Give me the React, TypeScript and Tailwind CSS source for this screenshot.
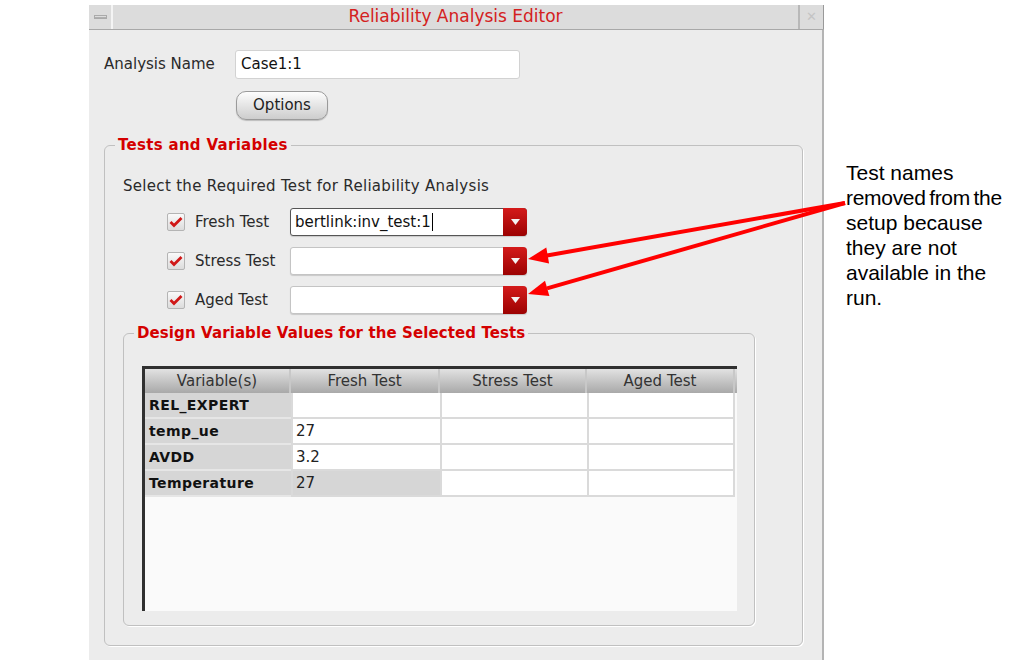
import React from 'react';

const ui = { fontFamily: '"DejaVu Sans", "Liberation Sans", sans-serif' };
const note = { fontFamily: '"Liberation Sans", Arial, sans-serif' };

const tests = [
  { name: 'Fresh Test', value: 'bertlink:inv_test:1', active: true },
  { name: 'Stress Test', value: '', active: false },
  { name: 'Aged Test', value: '', active: false },
];

const rows = [
  { name: 'REL_EXPERT', fresh: '', grey: false },
  { name: 'temp_ue', fresh: '27', grey: false },
  { name: 'AVDD', fresh: '3.2', grey: false },
  { name: 'Temperature', fresh: '27', grey: true },
];

const Check = () => (
  <div className="w-[18px] h-[18px] border border-[#b4b4b4] rounded-[2px] bg-gradient-to-b from-[#fafafa] to-[#dcdcdc] flex items-center justify-center">
    <svg width="14" height="12" viewBox="0 0 14 12">
      <path d="M1.5 6 L5 9.5 L12.5 2" stroke="#d01818" strokeWidth="2.8" fill="none" />
    </svg>
  </div>
);

const Combo = ({ value, active }: { value: string; active: boolean }) => (
  <div className={`w-[237px] h-[28px] flex rounded-[3px] border ${active ? 'border-[#555]' : 'border-[#c4c4c4]'} bg-white shadow-[0_1px_1px_rgba(0,0,0,0.15)]`}>
    <div className="flex-1 flex items-center pl-[4px] text-[15px] text-[#111]">
      {value}
      {active && <span className="w-px h-[18px] bg-black ml-[1px]" />}
    </div>
    <div className="w-[24px] -my-px -mr-px rounded-r-[4px] bg-gradient-to-b from-[#d41a1a] to-[#9c0202] flex items-center justify-center">
      <svg width="9" height="6" viewBox="0 0 9 6">
        <path d="M0 0 H9 L4.5 6 Z" fill="#f4f4f4" />
      </svg>
    </div>
  </div>
);

const Legend = ({ children, wide }: { children: React.ReactNode; wide?: boolean }) => (
  <legend className={`ml-[10px] px-[3px] text-[15px] ${wide ? 'tracking-[0.3px]' : 'tracking-[0.1px]'} font-bold text-[#d40000] leading-[18px]`}>
    {children}
  </legend>
);

export default function App() {
  return (
    <div className="relative w-[1013px] h-[660px] bg-white overflow-hidden flex" style={ui}>
      <div className="w-[89px] shrink-0" />

      {/* editor window */}
      <div className="w-[735px] shrink-0 pt-[5px] flex flex-col">
        <div className="h-[25px] flex bg-[#dcdcdc] border-b border-[#a8a8a8]">
          <div className="w-[24px] border-r-2 border-[#f4f4f4] flex items-center justify-center">
            <div className="w-[13px] h-[4px] bg-gradient-to-b from-[#f4f4f4] to-[#9a9a9a] border border-[#aaa]" />
          </div>
          <div className="flex-1 flex items-center justify-center text-[17px] text-[#d42020]">
            Reliability Analysis Editor
          </div>
          <div className="w-[26px] border-l-2 border-[#b8b8b8] border-r border-r-[#999] flex items-center justify-center text-[13px] text-[#c4c4c4] font-bold">
            ✕
          </div>
        </div>

        <div className="flex-1 bg-[#ececec] border-r-2 border-[#b4b4b4] pl-[15px] pt-[20px]">
          <div className="flex items-center">
            <div className="w-[131px] text-[15px] text-[#2a2a2a]">Analysis Name</div>
            <div className="w-[285px] h-[29px] bg-white border border-[#d2d2d2] rounded-[3px] flex items-center pl-[5px] text-[15px] text-[#111]">
              Case1:1
            </div>
          </div>
          <div className="pl-[132px] mt-[12px]">
            <div className="w-[92px] h-[29px] rounded-[10px] border border-[#9a9a9a] bg-gradient-to-b from-[#fdfdfd] to-[#cdcdcd] shadow-[0_1px_1px_rgba(0,0,0,0.2)] flex items-center justify-center text-[15px] text-[#222]">
              Options
            </div>
          </div>

          <fieldset className="w-[699px] mt-[16px] border border-[#c0c0c0] rounded-[6px] shadow-[1px_1px_0_#fff] pb-[19px]">
            <Legend wide>Tests and Variables</Legend>
            <div className="pl-[18px] mt-[23px] text-[15px] tracking-[0.3px] text-[#2a2a2a] leading-[18px]">
              Select the Required Test for Reliability Analysis
            </div>
            <div className="mt-[13px] flex flex-col gap-[11px] pl-[62px]">
              {tests.map((t) => (
                <div key={t.name} className="flex items-center">
                  <Check />
                  <div className="w-[105px] pl-[10px] text-[15px] text-[#2a2a2a]">{t.name}</div>
                  <Combo value={t.value} active={t.active} />
                </div>
              ))}
            </div>

            <fieldset className="w-[632px] ml-[18px] mt-[10px] border border-[#c0c0c0] rounded-[6px] shadow-[1px_1px_0_#fff] pt-[24px] pb-[14px]">
              <Legend>Design Variable Values for the Selected Tests</Legend>
              <div className="ml-[18px] w-[595px] h-[245px] bg-[#fafafa] border-t-[3px] border-l-[3px] border-[#303030]">
                <div className="grid grid-cols-[146px_149px_147px_148px] h-[24px] bg-gradient-to-b from-[#e2e2e2] to-[#a9a9a9] text-[15px] text-[#333]">
                  {['Variable(s)', 'Fresh Test', 'Stress Test', 'Aged Test'].map((h) => (
                    <div key={h} className="flex items-center justify-center border-r-2 border-[#c8c8c8]">
                      {h}
                    </div>
                  ))}
                </div>
                {rows.map((r) => (
                  <div key={r.name} className="grid grid-cols-[146px_149px_147px_148px] h-[26px] text-[14px]">
                    <div className="bg-[#d6d6d6] border-b-2 border-[#e6e6e6] flex items-center pl-[4px] font-bold tracking-[0.4px] text-[#111]">
                      {r.name}
                    </div>
                    <div className={`${r.grey ? 'bg-[#d6d6d6]' : 'bg-white'} border-b-2 border-l-2 border-[#dadada] flex items-center pl-[3px] text-[15px] text-[#222]`}>
                      {r.fresh}
                    </div>
                    <div className="bg-white border-b-2 border-l-2 border-[#dadada]" />
                    <div className="bg-white border-b-2 border-x-2 border-[#dadada]" />
                  </div>
                ))}
              </div>
            </fieldset>
          </fieldset>
        </div>
      </div>

      {/* annotation */}
      <div className="pl-[22px] pt-[160px] text-[21px] leading-[25px] text-black" style={note}>
        <div>Test names</div>
        <div className="tracking-[-0.3px] [word-spacing:-2px]">removed from the</div>
        <div>setup because</div>
        <div>they are not</div>
        <div>available in the</div>
        <div>run.</div>
      </div>

      <svg className="absolute left-0 top-0 pointer-events-none" width="1013" height="660">
        <line x1="845" y1="203" x2="547" y2="255.5" stroke="#f00" strokeWidth="4" />
        <polygon points="528,259 549.1,263.4 546.3,247.6" fill="#f00" />
        <line x1="845" y1="203" x2="547" y2="288.4" stroke="#f00" strokeWidth="4" />
        <polygon points="528,294 549.4,296.1 545,280.7" fill="#f00" />
      </svg>
    </div>
  );
}
